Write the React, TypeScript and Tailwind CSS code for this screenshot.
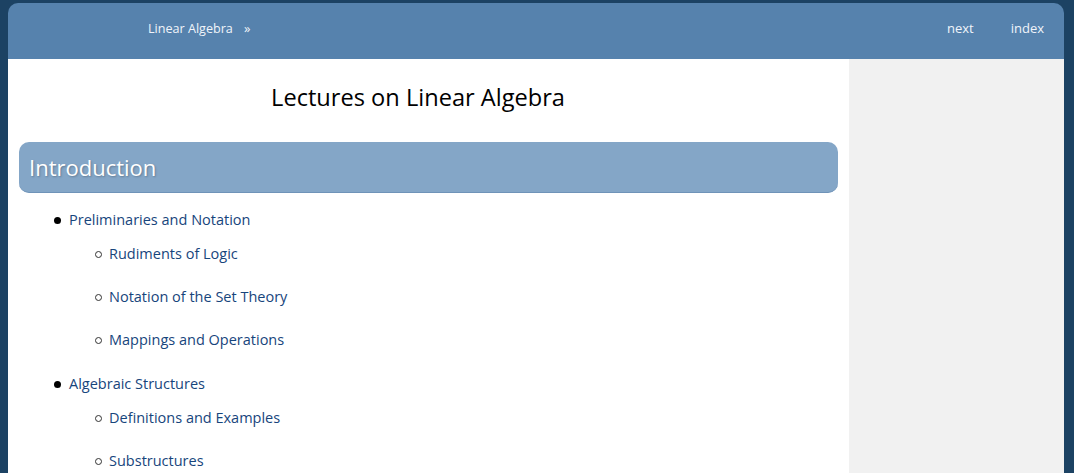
import React from "react";

const sections = [
    {
        title: "Preliminaries and Notation",
        items: ["Rudiments of Logic", "Notation of the Set Theory", "Mappings and Operations"],
    },
    {
        title: "Algebraic Structures",
        items: ["Definitions and Examples", "Substructures"],
    },
];

export default function App() {
    return (
        <div className="min-h-screen bg-[#1c4263] pl-2 pr-[10px] pt-[3px] font-['Open_Sans',sans-serif]">
            <div className="rounded-t-[10px] overflow-hidden">
                {/* Header */}
                <header className="h-14 bg-[#5682ad] flex items-center justify-between pb-[4px] text-[13px] text-[#f0f4fa]">
                    <div className="flex items-center pl-[132px]">
                        <a className="px-2 text-[12.6px]">Linear Algebra</a>
                        <span className="pl-[3px]">»</span>
                    </div>
                    <div className="flex items-center gap-[37px] pr-5">
                        <a>next</a>
                        <a>index</a>
                    </div>
                </header>

                <div className="flex h-[420px]">
                    <main className="w-[841px] bg-white">
                        <h1 className="text-center text-[23.6px] leading-9 text-black mt-5 mb-[27px] pr-[21px]">
                            Lectures on Linear Algebra
                        </h1>

                        <div className="mx-[11px] h-[51px] rounded-[10px] bg-[#84a6c7] border-b border-[#6f93b8] flex items-center pl-[10px]">
                            <h2 className="text-[22px] text-white [text-shadow:1px_1px_2px_rgba(0,0,0,0.25)]">Introduction</h2>
                        </div>

                        {/* Table of contents */}
                        <ul className="mt-[17px] flex flex-col gap-6 text-[14.5px] text-[#17457c]">
                            {sections.map((s) => (
                                <li key={s.title}>
                                    <div className="flex items-center h-5 pl-[46px]">
                                        <span className="w-[7px] h-[7px] rounded-full bg-black mr-[8px]"></span>
                                        <a>{s.title}</a>
                                    </div>
                                    <ul className="mt-[14px] flex flex-col gap-[23px]">
                                        {s.items.map((item) => (
                                            <li key={item} className="flex items-center h-5 pl-[87px]">
                                                <span className="w-[7px] h-[7px] rounded-full border border-[#333] mr-[7px]"></span>
                                                <a>{item}</a>
                                            </li>
                                        ))}
                                    </ul>
                                </li>
                            ))}
                        </ul>
                    </main>
                    <aside className="flex-1 bg-[#f1f1f1]"></aside>
                </div>
            </div>
        </div>
    );
}
